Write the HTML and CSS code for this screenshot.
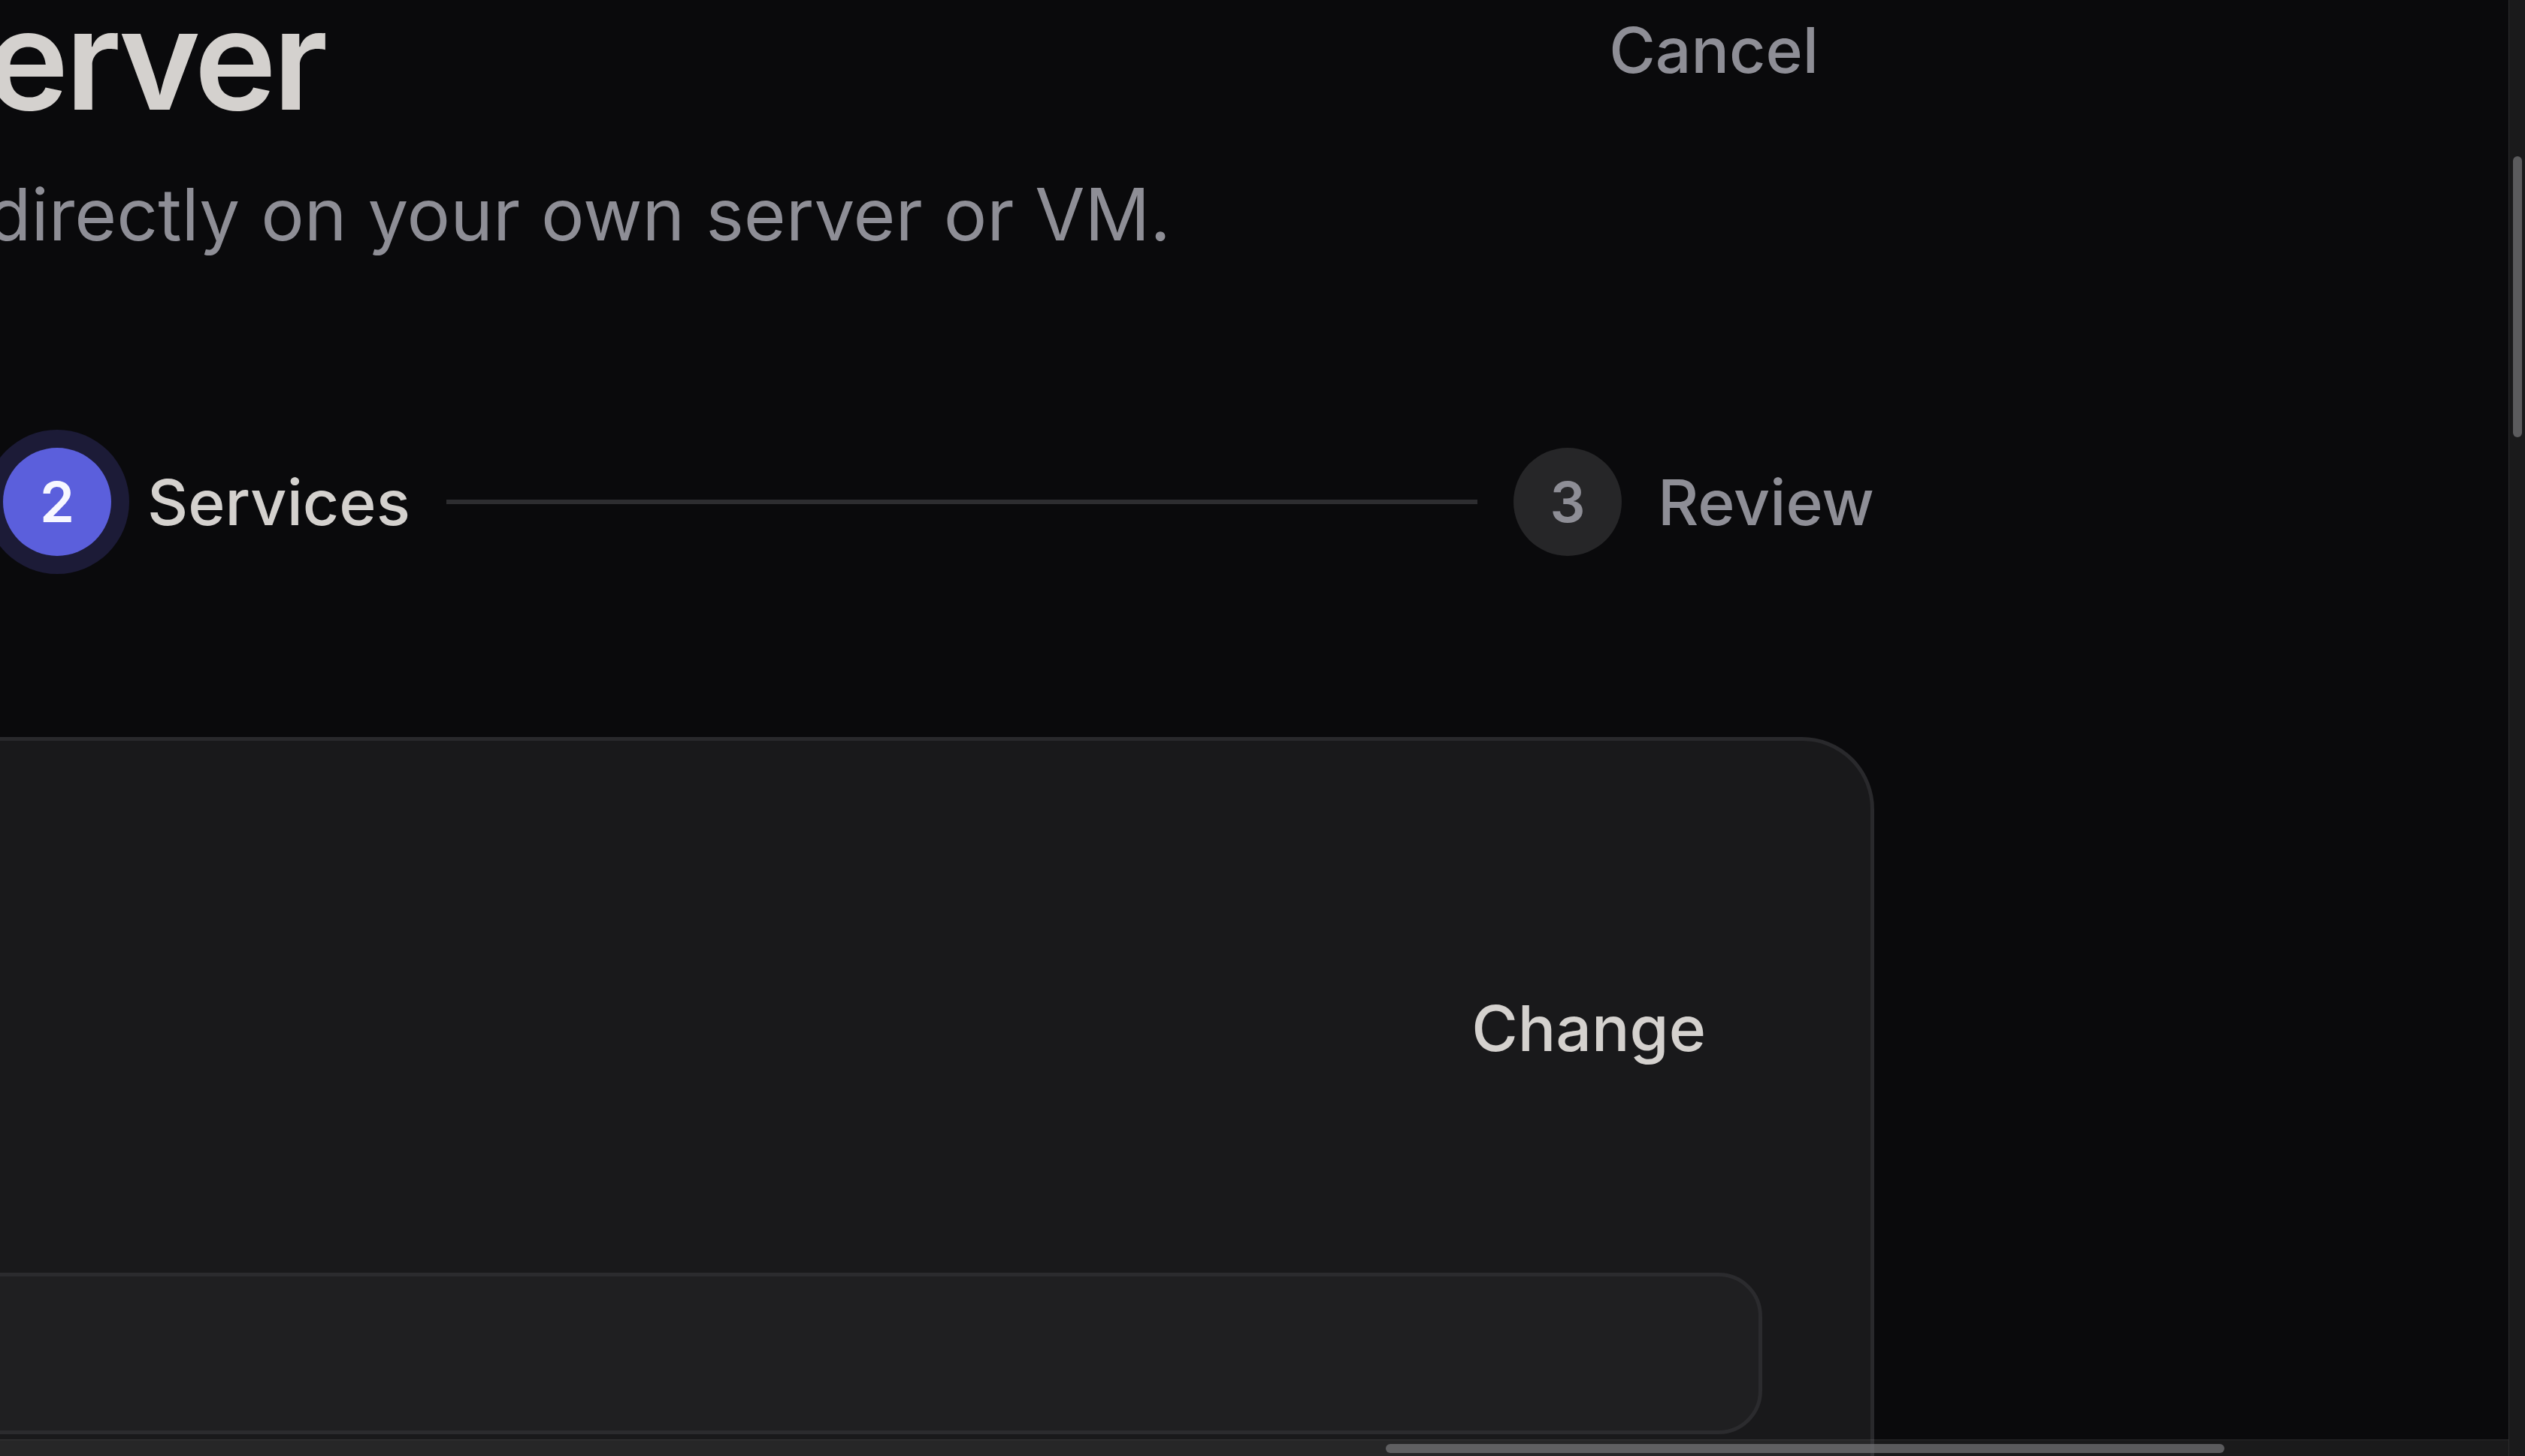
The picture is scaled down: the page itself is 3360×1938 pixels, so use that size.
FILE: index.html
```html
<!DOCTYPE html>
<html lang="en">
<head>
<meta charset="utf-8">
<title>Connect to your own server</title>
<link rel="stylesheet" href="styles.css">
</head>
<body>
<div class="page">
  <header class="header">
    <div class="title-block">
      <h1 class="title">Connect to your own server</h1>
      <p class="subtitle">Install the Coolify agent and run your app directly on your own server or VM.</p>
    </div>
    <button class="btn-ghost cancel" type="button">Cancel</button>
  </header>

  <ol class="steps">
    <li class="step done"><span class="step-num">1</span><span class="step-label">Server</span></li>
    <li class="step-line" aria-hidden="true"></li>
    <li class="step active"><span class="step-num">2</span><span class="step-label">Services</span></li>
    <li class="step-line" aria-hidden="true"></li>
    <li class="step"><span class="step-num">3</span><span class="step-label">Review</span></li>
  </ol>

  <section class="card">
    <div class="selected">
      <div class="selected-info">
        <span class="selected-name">my-server</span>
        <span class="selected-meta">10.0.0.12</span>
      </div>
      <button class="btn-ghost change" type="button">Change</button>
    </div>
    <div class="field"></div>
    <div class="field"></div>
  </section>
</div>

<div class="scrollbar vscroll"><div class="thumb"></div></div>
<div class="scrollbar hscroll"><div class="thumb"></div></div>
</body>
</html>
```

FILE: styles.css
```css
html, body {
  margin: 0;
  height: 100%;
  overflow: hidden;
  background: #0a0a0c;
}

body {
  font-family: Inter, "Noto Sans", "Liberation Sans", sans-serif;
  -webkit-font-smoothing: antialiased;
}

/* content scrolled: page is wider/taller than the viewport */
.page {
  width: 4416px;
  margin: -13px 0 0 -1922px;
}

.header {
  display: flex;
  align-items: flex-start;
  justify-content: space-between;
}

.title-block {
  flex: 1;
  min-width: 0;
}

.title {
  margin: 0;
  font-size: 185px;
  font-weight: 600;
  line-height: 1;
  letter-spacing: -0.026em;
  color: #d4d1ce;
  white-space: nowrap;
}

.subtitle {
  margin: 41px 0 0;
  font-size: 96px;
  line-height: 1.5;
  word-spacing: 1px;
  color: #8e8e96;
  white-space: nowrap;
}

.btn-ghost {
  background: none;
  border: 0;
  font-family: inherit;
  font-size: 84px;
  font-weight: 500;
  line-height: 1.5;
  padding: 15px 75px;
  cursor: pointer;
}

.cancel {
  flex: none;
  padding: 17px 74px 17px 75px;
  color: #8e8e96;
}

.steps {
  display: flex;
  align-items: center;
  list-style: none;
  margin: 239px 0 0;
  padding: 0;
}

.step {
  display: flex;
  align-items: center;
  gap: 48px;
}

.step-num {
  width: 144px;
  height: 144px;
  border-radius: 50%;
  display: flex;
  align-items: center;
  justify-content: center;
  font-size: 74px;
  font-weight: 600;
  background: #262628;
  color: #8e8e96;
}

.step.active .step-num {
  background: #5b5fdc;
  color: #f7f7ff;
  box-shadow: 0 0 0 24px #1c1b37;
}

.step-label {
  font-size: 84px;
  font-weight: 500;
  color: #8e8e96;
  white-space: nowrap;
}

.step.active .step-label {
  color: #d4d1ce;
}

.step-line {
  flex: 1;
  height: 6px;
  margin: 0 48px;
  background: #2d2d30;
}

.card {
  margin-top: 241px;
  background: #19191b;
  border: 5px solid #29292c;
  border-radius: 96px;
  padding: 144px;
}

.selected {
  display: flex;
  align-items: center;
  justify-content: space-between;
  height: 477px;
}

.selected-info {
  display: flex;
  flex-direction: column;
  gap: 12px;
}

.selected-name {
  font-size: 84px;
  font-weight: 600;
  color: #d4d1ce;
}

.selected-meta {
  font-size: 72px;
  color: #8e8e96;
}

.change {
  color: #d4d1ce;
}

.field {
  margin-top: 87px;
  height: 205px;
  background: #1f1f21;
  border: 5px solid #2b2b2e;
  border-radius: 58px;
}

.field + .field {
  margin-top: 72px;
}

/* overlay scrollbars */
.scrollbar {
  position: fixed;
  background: rgba(90, 90, 92, 0.2);
}

.scrollbar .thumb {
  position: absolute;
  border-radius: 6px;
  background: rgba(120, 120, 122, 0.7);
}

.vscroll {
  top: 0;
  right: 0;
  width: 21px;
  height: 100%;
  border-left: 1px solid rgba(255, 255, 255, 0.08);
}

.vscroll .thumb {
  left: 5px;
  top: 208px;
  width: 12px;
  height: 374px;
}

.hscroll {
  left: 0;
  right: 22px;
  bottom: 0;
  height: 21px;
  border-top: 1px solid rgba(255, 255, 255, 0.08);
}

.hscroll .thumb {
  top: 5px;
  left: 1844px;
  width: 1116px;
  height: 12px;
}
```
